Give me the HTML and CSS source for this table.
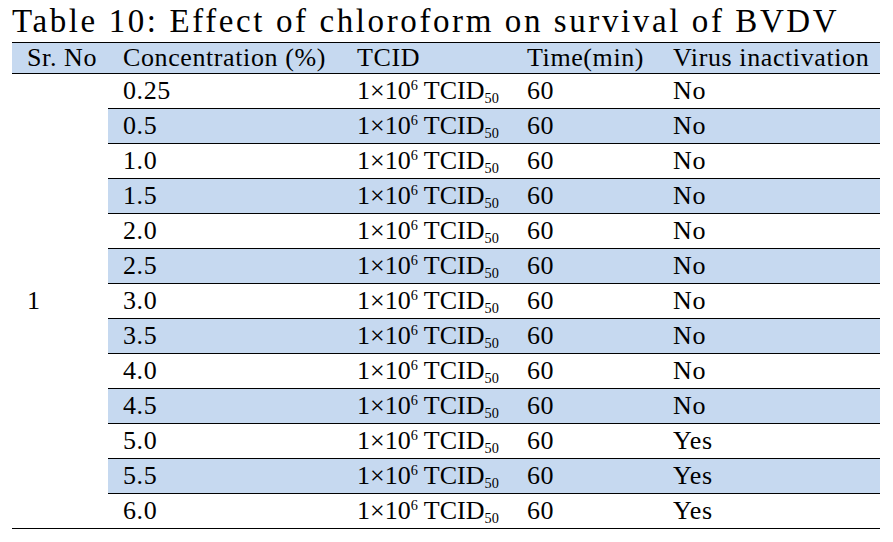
FILE: index.html
```html
<!DOCTYPE html>
<html>
<head>
<meta charset="utf-8">
<link rel="stylesheet" href="styles.css">
</head>
<body>
<div class="page">
  <h1 class="title">Table 10: Effect of chloroform on survival of BVDV</h1>
  <table class="data">
    <colgroup>
      <col class="c1"><col class="c2"><col class="c3"><col class="c4"><col class="c5">
    </colgroup>
    <thead>
      <tr class="head">
        <th class="p1">Sr. No</th>
        <th class="p2">Concentration (%)</th>
        <th>TCID</th>
        <th>Time(min)</th>
        <th>Virus inactivation</th>
      </tr>
    </thead>
    <tbody>
      <tr><td class="p1 sr" rowspan="13">1</td><td class="p2">0.25</td><td class="tc">1×10<sup>6</sup> TCID<sub>50</sub></td><td>60</td><td>No</td></tr>
      <tr class="alt"><td class="p2">0.5</td><td class="tc">1×10<sup>6</sup> TCID<sub>50</sub></td><td>60</td><td>No</td></tr>
      <tr><td class="p2">1.0</td><td class="tc">1×10<sup>6</sup> TCID<sub>50</sub></td><td>60</td><td>No</td></tr>
      <tr class="alt"><td class="p2">1.5</td><td class="tc">1×10<sup>6</sup> TCID<sub>50</sub></td><td>60</td><td>No</td></tr>
      <tr><td class="p2">2.0</td><td class="tc">1×10<sup>6</sup> TCID<sub>50</sub></td><td>60</td><td>No</td></tr>
      <tr class="alt"><td class="p2">2.5</td><td class="tc">1×10<sup>6</sup> TCID<sub>50</sub></td><td>60</td><td>No</td></tr>
      <tr><td class="p2">3.0</td><td class="tc">1×10<sup>6</sup> TCID<sub>50</sub></td><td>60</td><td>No</td></tr>
      <tr class="alt"><td class="p2">3.5</td><td class="tc">1×10<sup>6</sup> TCID<sub>50</sub></td><td>60</td><td>No</td></tr>
      <tr><td class="p2">4.0</td><td class="tc">1×10<sup>6</sup> TCID<sub>50</sub></td><td>60</td><td>No</td></tr>
      <tr class="alt"><td class="p2">4.5</td><td class="tc">1×10<sup>6</sup> TCID<sub>50</sub></td><td>60</td><td>No</td></tr>
      <tr><td class="p2">5.0</td><td class="tc">1×10<sup>6</sup> TCID<sub>50</sub></td><td>60</td><td>Yes</td></tr>
      <tr class="alt"><td class="p2">5.5</td><td class="tc">1×10<sup>6</sup> TCID<sub>50</sub></td><td>60</td><td>Yes</td></tr>
      <tr><td class="p2">6.0</td><td class="tc">1×10<sup>6</sup> TCID<sub>50</sub></td><td>60</td><td>Yes</td></tr>
    </tbody>
  </table>
</div>
</body>
</html>
```

FILE: styles.css
```css
html, body {
  margin: 0;
  padding: 0;
  background: #ffffff;
}
body {
  font-family: "Liberation Serif", "Times New Roman", serif;
  color: #000000;
}
.page {
  padding: 0 13px 0 12px;
}
.title {
  margin: 0;
  font-weight: normal;
  font-size: 33px;
  letter-spacing: 2.6px;
  line-height: 42px;
  height: 42px;
  white-space: nowrap;
}
.data {
  width: 868px;
  border-collapse: collapse;
  table-layout: fixed;
  font-size: 26px;
  letter-spacing: 0.6px;
}
.c1 { width: 96px; }
.c2 { width: 237px; }
.c3 { width: 170px; }
.c4 { width: 146px; }
.c5 { width: 219px; }
.data th, .data td {
  height: 34px;
  padding: 0 0 0 12px;
  text-align: left;
  font-weight: normal;
  vertical-align: middle;
  white-space: nowrap;
  border-top: 1px solid #000000;
  line-height: 34px;
}
.data th {
  height: 30px;
  line-height: 30px;
  background: #c6d9f0;
  border-bottom: 1px solid #000000;
}
.data .p1 { padding-left: 15px; }
.data .p2 { padding-left: 15px; }
.data .tc { letter-spacing: 0; }
.data tbody tr:first-child td { border-top: none; }
.data tbody tr:last-child td { border-bottom: 1px solid #000000; }
.data .sr { border-bottom: 1px solid #000000; }
.alt td { background: #c6d9f0; }
sup, sub {
  font-size: 0.55em;
  line-height: 0;
  letter-spacing: 0;
}
sup { vertical-align: 0.6em; }
sub { vertical-align: -0.3em; }
```
